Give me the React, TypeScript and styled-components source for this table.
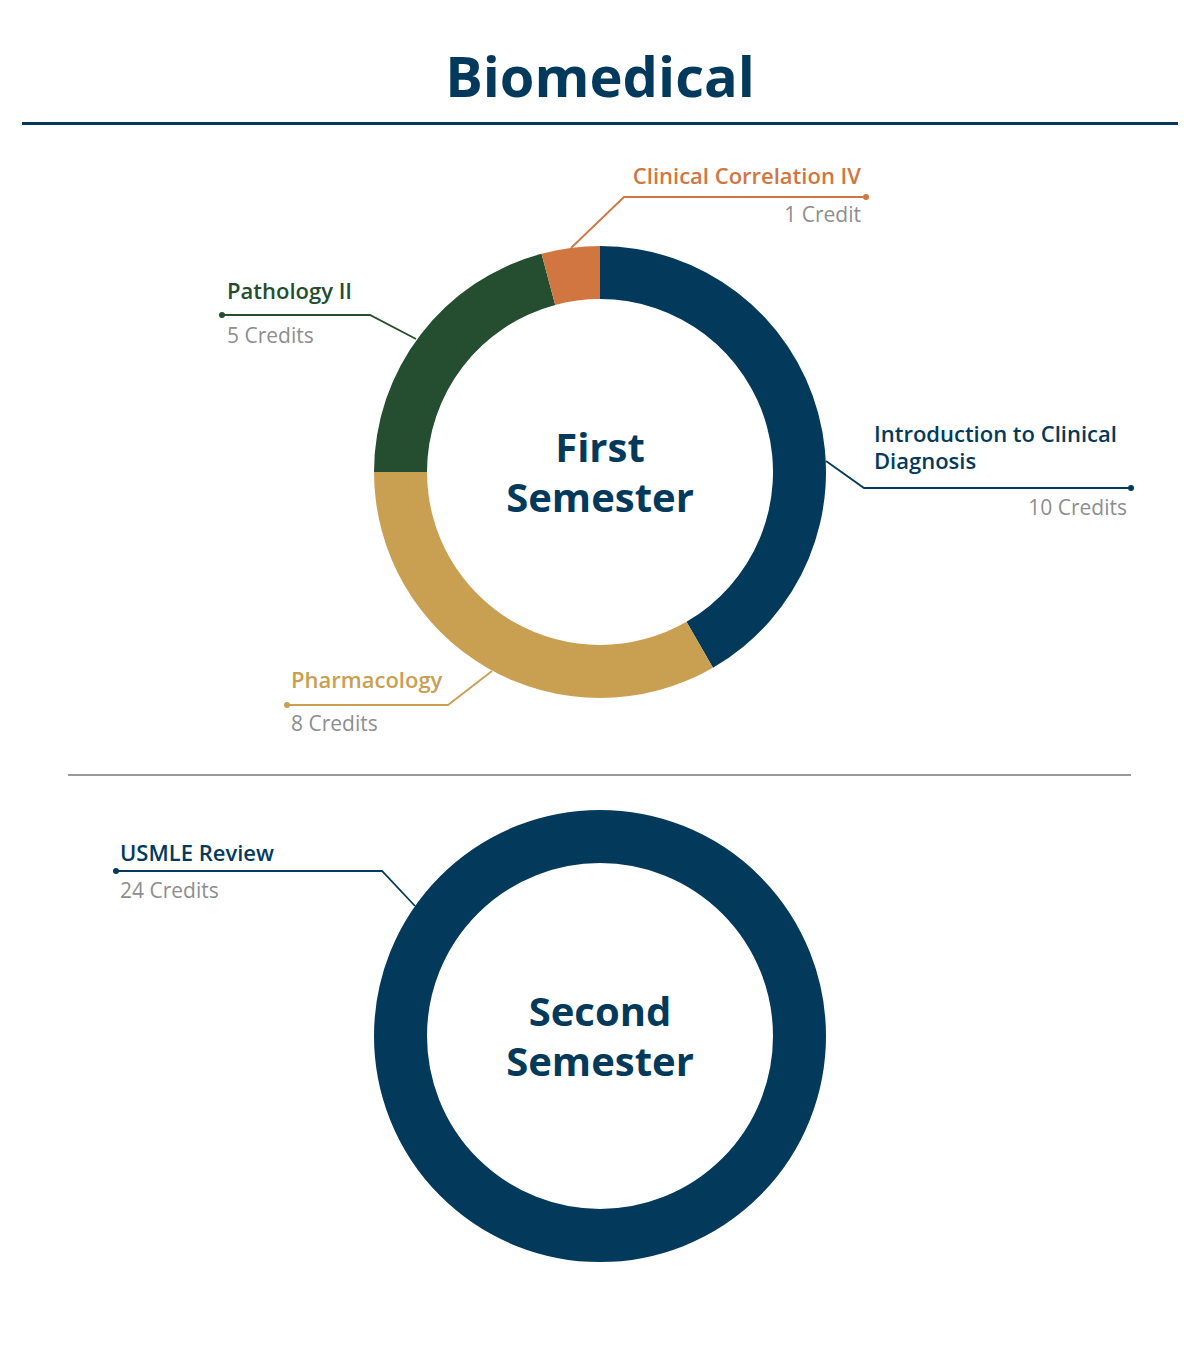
import React from "react";
import styled, { createGlobalStyle } from "styled-components";

const NAVY = "#033a5c";
const GOLD = "#c9a052";
const GREEN = "#254d2f";
const ORANGE = "#d27641";
const GREY = "#8e8e8e";

type Align = "left" | "right";

type Segment = { credits: number; color: string };

type Callout = {
  title: string[];
  credits: string;
  color: string;
  left?: number;
  right?: number;
  y: number;
  align: Align;
  creditsAlign: Align;
  gap: number;
  leader: [number, number][];
};

type Semester = {
  name: string[];
  height: number;
  cy: number;
  segments: Segment[];
  callouts: Callout[];
};

const semesters: Semester[] = [
  {
    name: ["First", "Semester"],
    height: 649,
    cy: 347,
    segments: [
      { credits: 10, color: NAVY },
      { credits: 8, color: GOLD },
      { credits: 5, color: GREEN },
      { credits: 1, color: ORANGE },
    ],
    callouts: [
      {
        title: ["Clinical Correlation IV"],
        credits: "1 Credit",
        color: ORANGE,
        right: 861,
        y: 37,
        align: "right",
        creditsAlign: "right",
        gap: 12,
        leader: [
          [571, 123],
          [624, 72],
          [866, 72],
        ],
      },
      {
        title: ["Pathology II"],
        credits: "5 Credits",
        color: GREEN,
        left: 227,
        y: 152,
        align: "left",
        creditsAlign: "left",
        gap: 18,
        leader: [
          [416, 214],
          [370, 190],
          [222, 190],
        ],
      },
      {
        title: ["Introduction to Clinical", "Diagnosis"],
        credits: "10 Credits",
        color: NAVY,
        left: 874,
        right: 1127,
        y: 295,
        align: "left",
        creditsAlign: "right",
        gap: 20,
        leader: [
          [826, 336],
          [864, 363],
          [1131, 363],
        ],
      },
      {
        title: ["Pharmacology"],
        credits: "8 Credits",
        color: GOLD,
        left: 291,
        y: 541,
        align: "left",
        creditsAlign: "left",
        gap: 17,
        leader: [
          [492, 546],
          [448, 580],
          [287, 580],
        ],
      },
    ],
  },
  {
    name: ["Second", "Semester"],
    height: 579,
    cy: 260,
    segments: [{ credits: 24, color: NAVY }],
    callouts: [
      {
        title: ["USMLE Review"],
        credits: "24 Credits",
        color: NAVY,
        left: 120,
        y: 63,
        align: "left",
        creditsAlign: "left",
        gap: 11,
        leader: [
          [415, 130],
          [382, 95],
          [116, 95],
        ],
      },
    ],
  },
];

const R_OUT = 226;
const R_IN = 173;

// ring slice between two angles (degrees clockwise from 12 o'clock)
const slicePath = (cx: number, cy: number, a0: number, a1: number) => {
  const pt = (r: number, a: number) => {
    const rad = (a * Math.PI) / 180;
    return `${cx + r * Math.sin(rad)} ${cy - r * Math.cos(rad)}`;
  };
  const large = a1 - a0 > 180 ? 1 : 0;
  return [
    `M ${pt(R_OUT, a0)}`,
    `A ${R_OUT} ${R_OUT} 0 ${large} 1 ${pt(R_OUT, a1)}`,
    `L ${pt(R_IN, a1)}`,
    `A ${R_IN} ${R_IN} 0 ${large} 0 ${pt(R_IN, a0)}`,
    "Z",
  ].join(" ");
};

const Lines = ({ lines }: { lines: string[] }) => (
  <>
    {lines.map((line, i) => (
      <React.Fragment key={line}>
        {i > 0 && <br />}
        {line}
      </React.Fragment>
    ))}
  </>
);

const Donut = ({ s }: { s: Semester }) => {
  const total = s.segments.reduce((sum, seg) => sum + seg.credits, 0);
  let start = 0;
  return (
    <ChartSvg width={1200} height={s.height} viewBox={`0 0 1200 ${s.height}`}>
      {s.segments.length === 1 ? (
        <circle
          cx={600}
          cy={s.cy}
          r={(R_OUT + R_IN) / 2}
          fill="none"
          stroke={s.segments[0].color}
          strokeWidth={R_OUT - R_IN}
        />
      ) : (
        s.segments.map((seg) => {
          const a0 = start;
          const a1 = start + (seg.credits / total) * 360;
          start = a1;
          return <path key={seg.color} d={slicePath(600, s.cy, a0, a1)} fill={seg.color} />;
        })
      )}
      {s.callouts.map((c) => {
        const end = c.leader[c.leader.length - 1];
        return (
          <g key={c.credits}>
            <polyline
              points={c.leader.map((p) => p.join(",")).join(" ")}
              fill="none"
              stroke={c.color}
              strokeWidth={1.8}
            />
            <circle cx={end[0]} cy={end[1]} r={3} fill={c.color} />
          </g>
        );
      })}
    </ChartSvg>
  );
};

const App = () => {
  return (
    <>
      <GlobalStyle />
      <Page>
        <Header>
          <Title>Biomedical</Title>
        </Header>
        <Rule />
        {semesters.map((s, i) => (
          <React.Fragment key={s.name[0]}>
            {i > 0 && <Divider />}
            <Canvas $height={s.height}>
              <Donut s={s} />
              <CenterLabel $cy={s.cy}>
                <Lines lines={s.name} />
              </CenterLabel>
              {s.callouts.map((c) => (
                <CalloutBox
                  key={c.credits}
                  $left={c.left}
                  $right={c.right}
                  $y={c.y}
                  $align={c.align}
                >
                  <CourseName $color={c.color}>
                    <Lines lines={c.title} />
                  </CourseName>
                  <Credits $gap={c.gap} $align={c.creditsAlign}>
                    {c.credits}
                  </Credits>
                </CalloutBox>
              ))}
            </Canvas>
          </React.Fragment>
        ))}
      </Page>
    </>
  );
};

export default App;

const GlobalStyle = createGlobalStyle`
  body {
    margin: 0;
    background: #ffffff;
    font-family: "Open Sans", "Noto Sans", sans-serif;
  }
`;

const Page = styled.div`
  width: 1200px;
  height: 1356px;
  overflow: hidden;
  background: #ffffff;
`;

const Header = styled.header`
  padding-top: 41px;
  padding-bottom: 13px;
  text-align: center;
`;

const Title = styled.h1`
  margin: 0;
  font-size: 56px;
  line-height: 68px;
  font-weight: 700;
  color: ${NAVY};
`;

const Rule = styled.div`
  height: 3px;
  margin: 0 22px;
  background: ${NAVY};
`;

const Divider = styled.div`
  height: 2px;
  margin: 0 69px 0 68px;
  background: #9a9a9c;
`;

const Canvas = styled.section<{ $height: number }>`
  position: relative;
  height: ${(p) => p.$height}px;
`;

const ChartSvg = styled.svg`
  display: block;
`;

const CenterLabel = styled.div<{ $cy: number }>`
  position: absolute;
  left: 0;
  right: 0;
  top: ${(p) => p.$cy - 50}px;
  height: 100px;
  display: flex;
  flex-direction: column;
  justify-content: center;
  text-align: center;
  font-size: 40px;
  line-height: 50px;
  font-weight: 700;
  color: ${NAVY};
`;

const CalloutBox = styled.div<{ $left?: number; $right?: number; $y: number; $align: Align }>`
  position: absolute;
  top: ${(p) => p.$y}px;
  ${(p) => (p.$left !== undefined ? `left: ${p.$left}px;` : "")}
  ${(p) => (p.$right !== undefined ? `right: ${1200 - p.$right}px;` : "")}
  text-align: ${(p) => p.$align};
  line-height: 27px;
  white-space: nowrap;
`;

const CourseName = styled.div<{ $color: string }>`
  font-size: 22px;
  font-weight: 600;
  color: ${(p) => p.$color};
`;

const Credits = styled.div<{ $gap: number; $align: Align }>`
  margin-top: ${(p) => p.$gap}px;
  text-align: ${(p) => p.$align};
  font-size: 21px;
  font-weight: 400;
  color: ${GREY};
`;
